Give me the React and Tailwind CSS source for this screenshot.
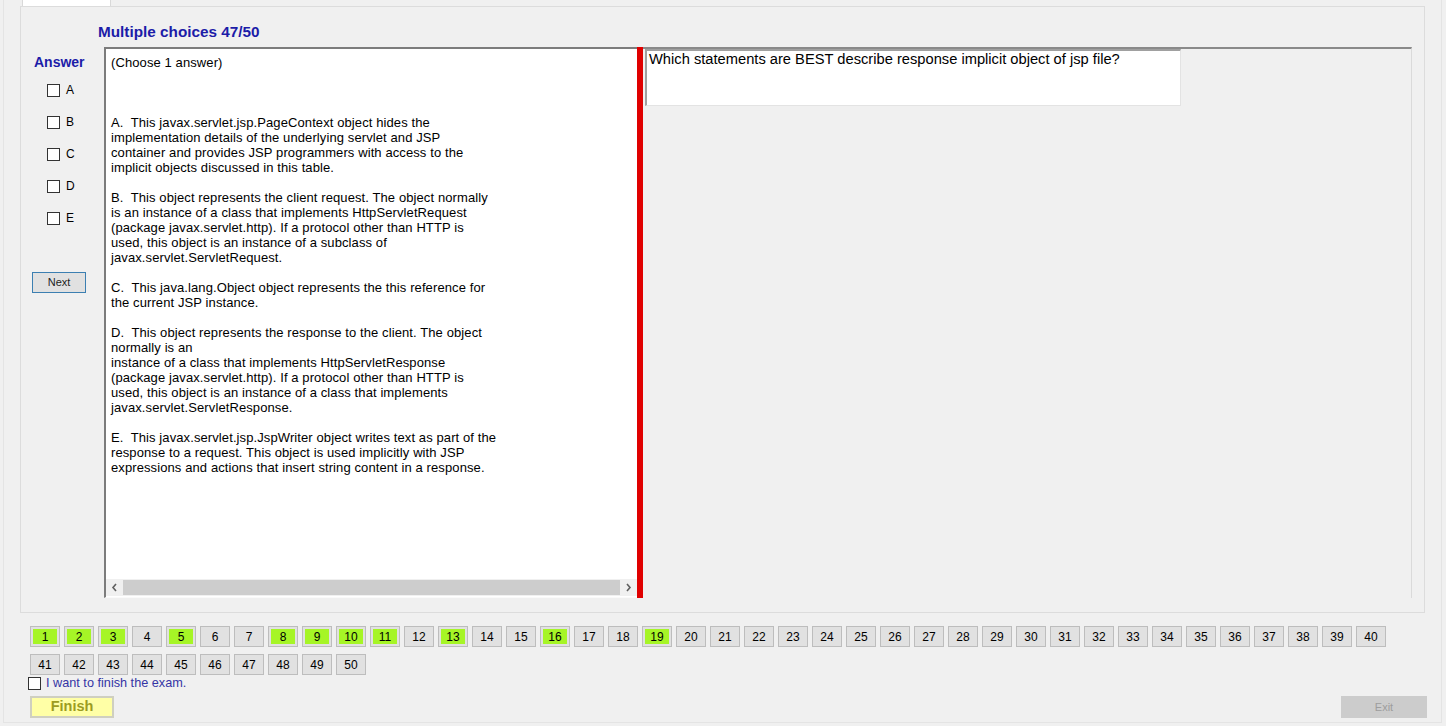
import { useState } from "react";

const LINES = [
  "(Choose 1 answer)",
  "",
  "",
  "",
  "A.  This javax.servlet.jsp.PageContext object hides the",
  "implementation details of the underlying servlet and JSP",
  "container and provides JSP programmers with access to the",
  "implicit objects discussed in this table.",
  "",
  "B.  This object represents the client request. The object normally",
  "is an instance of a class that implements HttpServletRequest",
  "(package javax.servlet.http). If a protocol other than HTTP is",
  "used, this object is an instance of a subclass of",
  "javax.servlet.ServletRequest.",
  "",
  "C.  This java.lang.Object object represents the this reference for",
  "the current JSP instance.",
  "",
  "D.  This object represents the response to the client. The object",
  "normally is an",
  "instance of a class that implements HttpServletResponse",
  "(package javax.servlet.http). If a protocol other than HTTP is",
  "used, this object is an instance of a class that implements",
  "javax.servlet.ServletResponse.",
  "",
  "E.  This javax.servlet.jsp.JspWriter object writes text as part of the",
  "response to a request. This object is used implicitly with JSP",
  "expressions and actions that insert string content in a response.",
];

const ANSWERED = [1, 2, 3, 5, 8, 9, 10, 11, 13, 16, 19];

function Box({ checked, onChange }) {
  return (
    <button
      onClick={onChange}
      className="w-[13px] h-[13px] border border-[#333] bg-white flex items-center justify-center shrink-0"
    >
      {checked && (
        <svg width="9" height="9" viewBox="0 0 9 9">
          <path d="M1 4.5 L3.5 7 L8 1.5" stroke="#222" strokeWidth="1.5" fill="none" />
        </svg>
      )}
    </button>
  );
}

function NumButton({ n }) {
  const done = ANSWERED.includes(n);
  return (
    <div className="w-[30px] h-[21px] border border-[#bdbdbd] bg-[#e1e1e1] p-[2px] shrink-0">
      <div
        className={
          "w-full h-full flex items-center justify-center text-[12px] text-black " +
          (done ? "bg-[#a6f526]" : "bg-[#e1e1e1]")
        }
      >
        {n}
      </div>
    </div>
  );
}

export default function App() {
  const [picked, setPicked] = useState({});
  const [finish, setFinish] = useState(false);

  return (
    <div className="w-[1446px] h-[726px] bg-[#f0f0f0] overflow-hidden font-['Liberation_Sans',Arial,sans-serif] text-black">
      <div className="ml-[3px] w-[1439px] h-[723px] border-l border-r border-b border-[#e4e4e4] flex flex-col">
        {/* tab strip */}
        <div className="h-[6px] pl-[18px] flex">
          <div className="w-[89px] h-full bg-white border-l border-r border-[#d9d9d9]" />
        </div>

        {/* main group */}
        <div className="ml-[16px] w-[1405px] h-[607px] border border-[#dcdcdc] flex flex-col pl-[11px]">
          <div className="h-[40px] pt-[16px] pl-[66px] text-[15.3px] leading-[18px] font-bold text-[#1c1ca8]">
            Multiple choices 47/50
          </div>

          <div className="flex h-[551px]">
            {/* answer column */}
            <div className="w-[72px] flex flex-col">
              <div className="mt-[7px] pl-[2px] text-[14px] leading-[17px] font-bold text-[#1c1ca8]">Answer</div>
              <div className="mt-[3px] flex flex-col">
                {["A", "B", "C", "D", "E"].map((l) => (
                  <div key={l} className="h-[32px] flex items-center pl-[15px] gap-[6px]">
                    <Box
                      checked={!!picked[l]}
                      onChange={() => setPicked({ ...picked, [l]: !picked[l] })}
                    />
                    <span className="text-[12px]">{l}</span>
                  </div>
                ))}
              </div>
              <button className="mt-[38px] w-[54px] h-[21px] border border-[#3c7fb1] bg-[#e1e1e1] text-[11px] text-[#222] flex items-center justify-center">
                Next
              </button>
            </div>

            {/* answer text */}
            <div className="w-[533px] bg-white border-l-2 border-t-2 border-[#7c7c7c] border-b border-b-[#fafafa] flex flex-col">
              <div className="flex-1 pt-[6px] pl-[5px] text-[13px] leading-[15px] tracking-[0.1px] overflow-hidden">
                {LINES.map((t, i) => (
                  <div key={i} className="h-[15px] whitespace-pre">
                    {t}
                  </div>
                ))}
              </div>
              <div className="h-[17px] bg-[#f0f0f0] flex items-center mb-[1px]">
                <div className="w-[17px] h-full flex items-center justify-center">
                  <svg width="7" height="9" viewBox="0 0 7 9">
                    <path d="M5 1 L2 4.5 L5 8" stroke="#606060" strokeWidth="1.6" fill="none" />
                  </svg>
                </div>
                <div className="flex-1 h-[15px] bg-[#cdcdcd]" />
                <div className="w-[17px] h-full flex items-center justify-center">
                  <svg width="7" height="9" viewBox="0 0 7 9">
                    <path d="M2 1 L5 4.5 L2 8" stroke="#606060" strokeWidth="1.6" fill="none" />
                  </svg>
                </div>
              </div>
            </div>

            {/* splitter */}
            <div className="w-[6px] bg-[#e00000]" />

            {/* question panel */}
            <div className="w-[769px] border-t-2 border-[#8a8a8a] border-r border-r-[#dadada] pl-[2px]">
              <div className="w-[536px] h-[57px] bg-white border-l-2 border-t-2 border-[#a0a0a0] border-r border-b border-r-[#e3e3e3] border-b-[#e3e3e3] pl-[2px] text-[14.7px] leading-[17px]">
                Which statements are BEST describe response implicit object of jsp file?
              </div>
            </div>
          </div>
        </div>

        {/* bottom area */}
        <div className="flex flex-col pl-[24px] pr-[14px] mt-[13px]">
          <div className="flex gap-[4px] pl-[2px]">
            {Array.from({ length: 40 }, (_, i) => (
              <NumButton key={i} n={i + 1} />
            ))}
          </div>
          <div className="flex gap-[4px] pl-[2px] mt-[7px]">
            {Array.from({ length: 10 }, (_, i) => (
              <NumButton key={i} n={i + 41} />
            ))}
          </div>
          <div className="flex items-center gap-[5px] mt-[1px] h-[15px]">
            <Box checked={finish} onChange={() => setFinish(!finish)} />
            <span className="text-[12.7px] text-[#3535a5]">I want to finish the exam.</span>
          </div>
          <div className="flex justify-between items-start mt-[5px] h-[22px]">
            <button className="ml-[2px] w-[84px] h-[22px] bg-[#ffffa6] border-2 border-[#cfcfc0] text-[14.5px] font-bold text-[#9c9c22] flex items-center justify-center">
              Finish
            </button>
            <button className="w-[86px] h-[22px] bg-[#cccccc] text-[11px] text-[#9d9d9d] flex items-center justify-center">
              Exit
            </button>
          </div>
        </div>
      </div>
    </div>
  );
}
